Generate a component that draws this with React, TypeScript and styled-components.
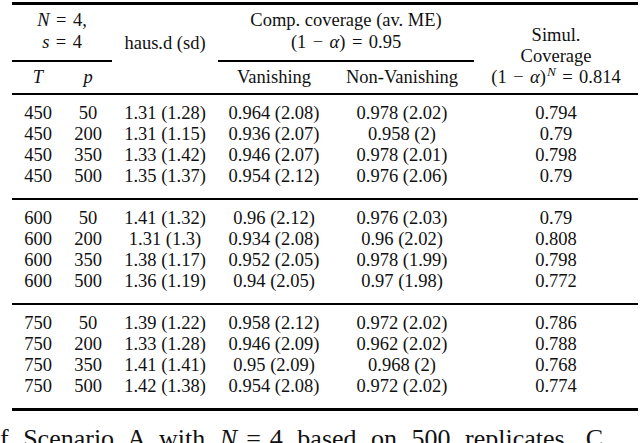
import styled, { createGlobalStyle } from "styled-components";

const GlobalStyle = createGlobalStyle`
  html, body {
    margin: 0;
    padding: 0;
    background: #fff;
  }
  body {
    font-family: "Liberation Serif", "Times New Roman", serif;
    color: #111;
  }
`;

const Page = styled.div`
  width: 640px;
  height: 443px;
  overflow: hidden;
  padding-top: 2px;
  box-sizing: border-box;
`;

const Table = styled.table`
  margin-left: 12px;
  width: 626px;
  border-collapse: collapse;
  table-layout: fixed;
  font-size: 18.5px;
  line-height: 21px;
  border-top: 3px solid #000;
  border-bottom: 3px solid #000;
`;

const Col = styled.col<{ $w: number }>`
  width: ${(p) => p.$w}px;
`;

const HeadCell = styled.th<{ $rule?: boolean }>`
  font-weight: normal;
  text-align: center;
  vertical-align: bottom;
  padding: 5px 0 7px;
  line-height: 21.5px;
  white-space: nowrap;
  border-bottom: ${(p) => (p.$rule ? "2px solid #000" : "none")};
`;

const SubCell = styled.th`
  font-weight: normal;
  text-align: center;
  vertical-align: bottom;
  padding: 5px 0 5px;
  white-space: nowrap;
  border-bottom: 2px solid #000;
`;

const Block = styled.tbody`
  & + & {
    border-top: 2px solid #000;
  }
  tr:first-child td {
    padding-top: 8px;
  }
  tr:last-child td {
    padding-bottom: 11px;
  }
`;

const Cell = styled.td`
  text-align: center;
  padding: 0;
  white-space: nowrap;
`;

const Var = styled.i`
  font-style: italic;
`;

// math operator: wide glyph box with relation spacing, like TeX
const Op = styled.span`
  display: inline-block;
  width: 0.78em;
  margin: 0 0.24em;
  text-align: center;
`;

const Sup = styled.sup`
  font-size: 0.72em;
  line-height: 0;
  vertical-align: 0.5em;
  margin-left: 1px;
`;

const Caption = styled.p`
  margin: 13px 0 0;
  font-size: 26px;
  line-height: 30px;
  white-space: nowrap;
  word-spacing: 8px;
  color: #111;
`;

type Row = [number, string, string, string, string];

const blocks: { t: number; rows: Row[] }[] = [
  {
    t: 450,
    rows: [
      [50, "1.31 (1.28)", "0.964 (2.08)", "0.978 (2.02)", "0.794"],
      [200, "1.31 (1.15)", "0.936 (2.07)", "0.958 (2)", "0.79"],
      [350, "1.33 (1.42)", "0.946 (2.07)", "0.978 (2.01)", "0.798"],
      [500, "1.35 (1.37)", "0.954 (2.12)", "0.976 (2.06)", "0.79"],
    ],
  },
  {
    t: 600,
    rows: [
      [50, "1.41 (1.32)", "0.96 (2.12)", "0.976 (2.03)", "0.79"],
      [200, "1.31 (1.3)", "0.934 (2.08)", "0.96 (2.02)", "0.808"],
      [350, "1.38 (1.17)", "0.952 (2.05)", "0.978 (1.99)", "0.798"],
      [500, "1.36 (1.19)", "0.94 (2.05)", "0.97 (1.98)", "0.772"],
    ],
  },
  {
    t: 750,
    rows: [
      [50, "1.39 (1.22)", "0.958 (2.12)", "0.972 (2.02)", "0.786"],
      [200, "1.33 (1.28)", "0.946 (2.09)", "0.962 (2.02)", "0.788"],
      [350, "1.41 (1.41)", "0.95 (2.09)", "0.968 (2)", "0.768"],
      [500, "1.42 (1.38)", "0.954 (2.08)", "0.972 (2.02)", "0.774"],
    ],
  },
];

const widths = [52, 48, 106, 112, 144, 164];

export default function App() {
  return (
    <Page>
      <GlobalStyle />
      <Table>
        <colgroup>
          {widths.map((w, i) => (
            <Col key={i} $w={w} />
          ))}
        </colgroup>
        <thead>
          <tr>
            <HeadCell colSpan={2} $rule>
              <Var>N</Var>
              <Op>=</Op>4,
              <br />
              <Var>s</Var>
              <Op>=</Op>4
            </HeadCell>
            <HeadCell>haus.d (sd)</HeadCell>
            <HeadCell colSpan={2} $rule>
              Comp. coverage (av. ME)
              <br />
              (1<Op>−</Op>
              <Var>α</Var>)<Op>=</Op>0.95
            </HeadCell>
            <SubCell rowSpan={2}>
              Simul.
              <br />
              Coverage
              <br />
              (1<Op>−</Op>
              <Var>α</Var>)<Sup>
                <Var>N</Var>
              </Sup>
              <Op>=</Op>0.814
            </SubCell>
          </tr>
          <tr>
            <SubCell>
              <Var>T</Var>
            </SubCell>
            <SubCell>
              <Var>p</Var>
            </SubCell>
            <SubCell />
            <SubCell>Vanishing</SubCell>
            <SubCell>Non-Vanishing</SubCell>
          </tr>
        </thead>
        {blocks.map((b) => (
          <Block key={b.t}>
            {b.rows.map((r) => (
              <tr key={r[0]}>
                <Cell>{b.t}</Cell>
                <Cell>{r[0]}</Cell>
                <Cell>{r[1]}</Cell>
                <Cell>{r[2]}</Cell>
                <Cell>{r[3]}</Cell>
                <Cell>{r[4]}</Cell>
              </tr>
            ))}
          </Block>
        ))}
      </Table>
      <Caption>
        f Scenario A with <Var>N</Var>
        <Op>=</Op>4 based on 500 replicates. C
      </Caption>
    </Page>
  );
}
